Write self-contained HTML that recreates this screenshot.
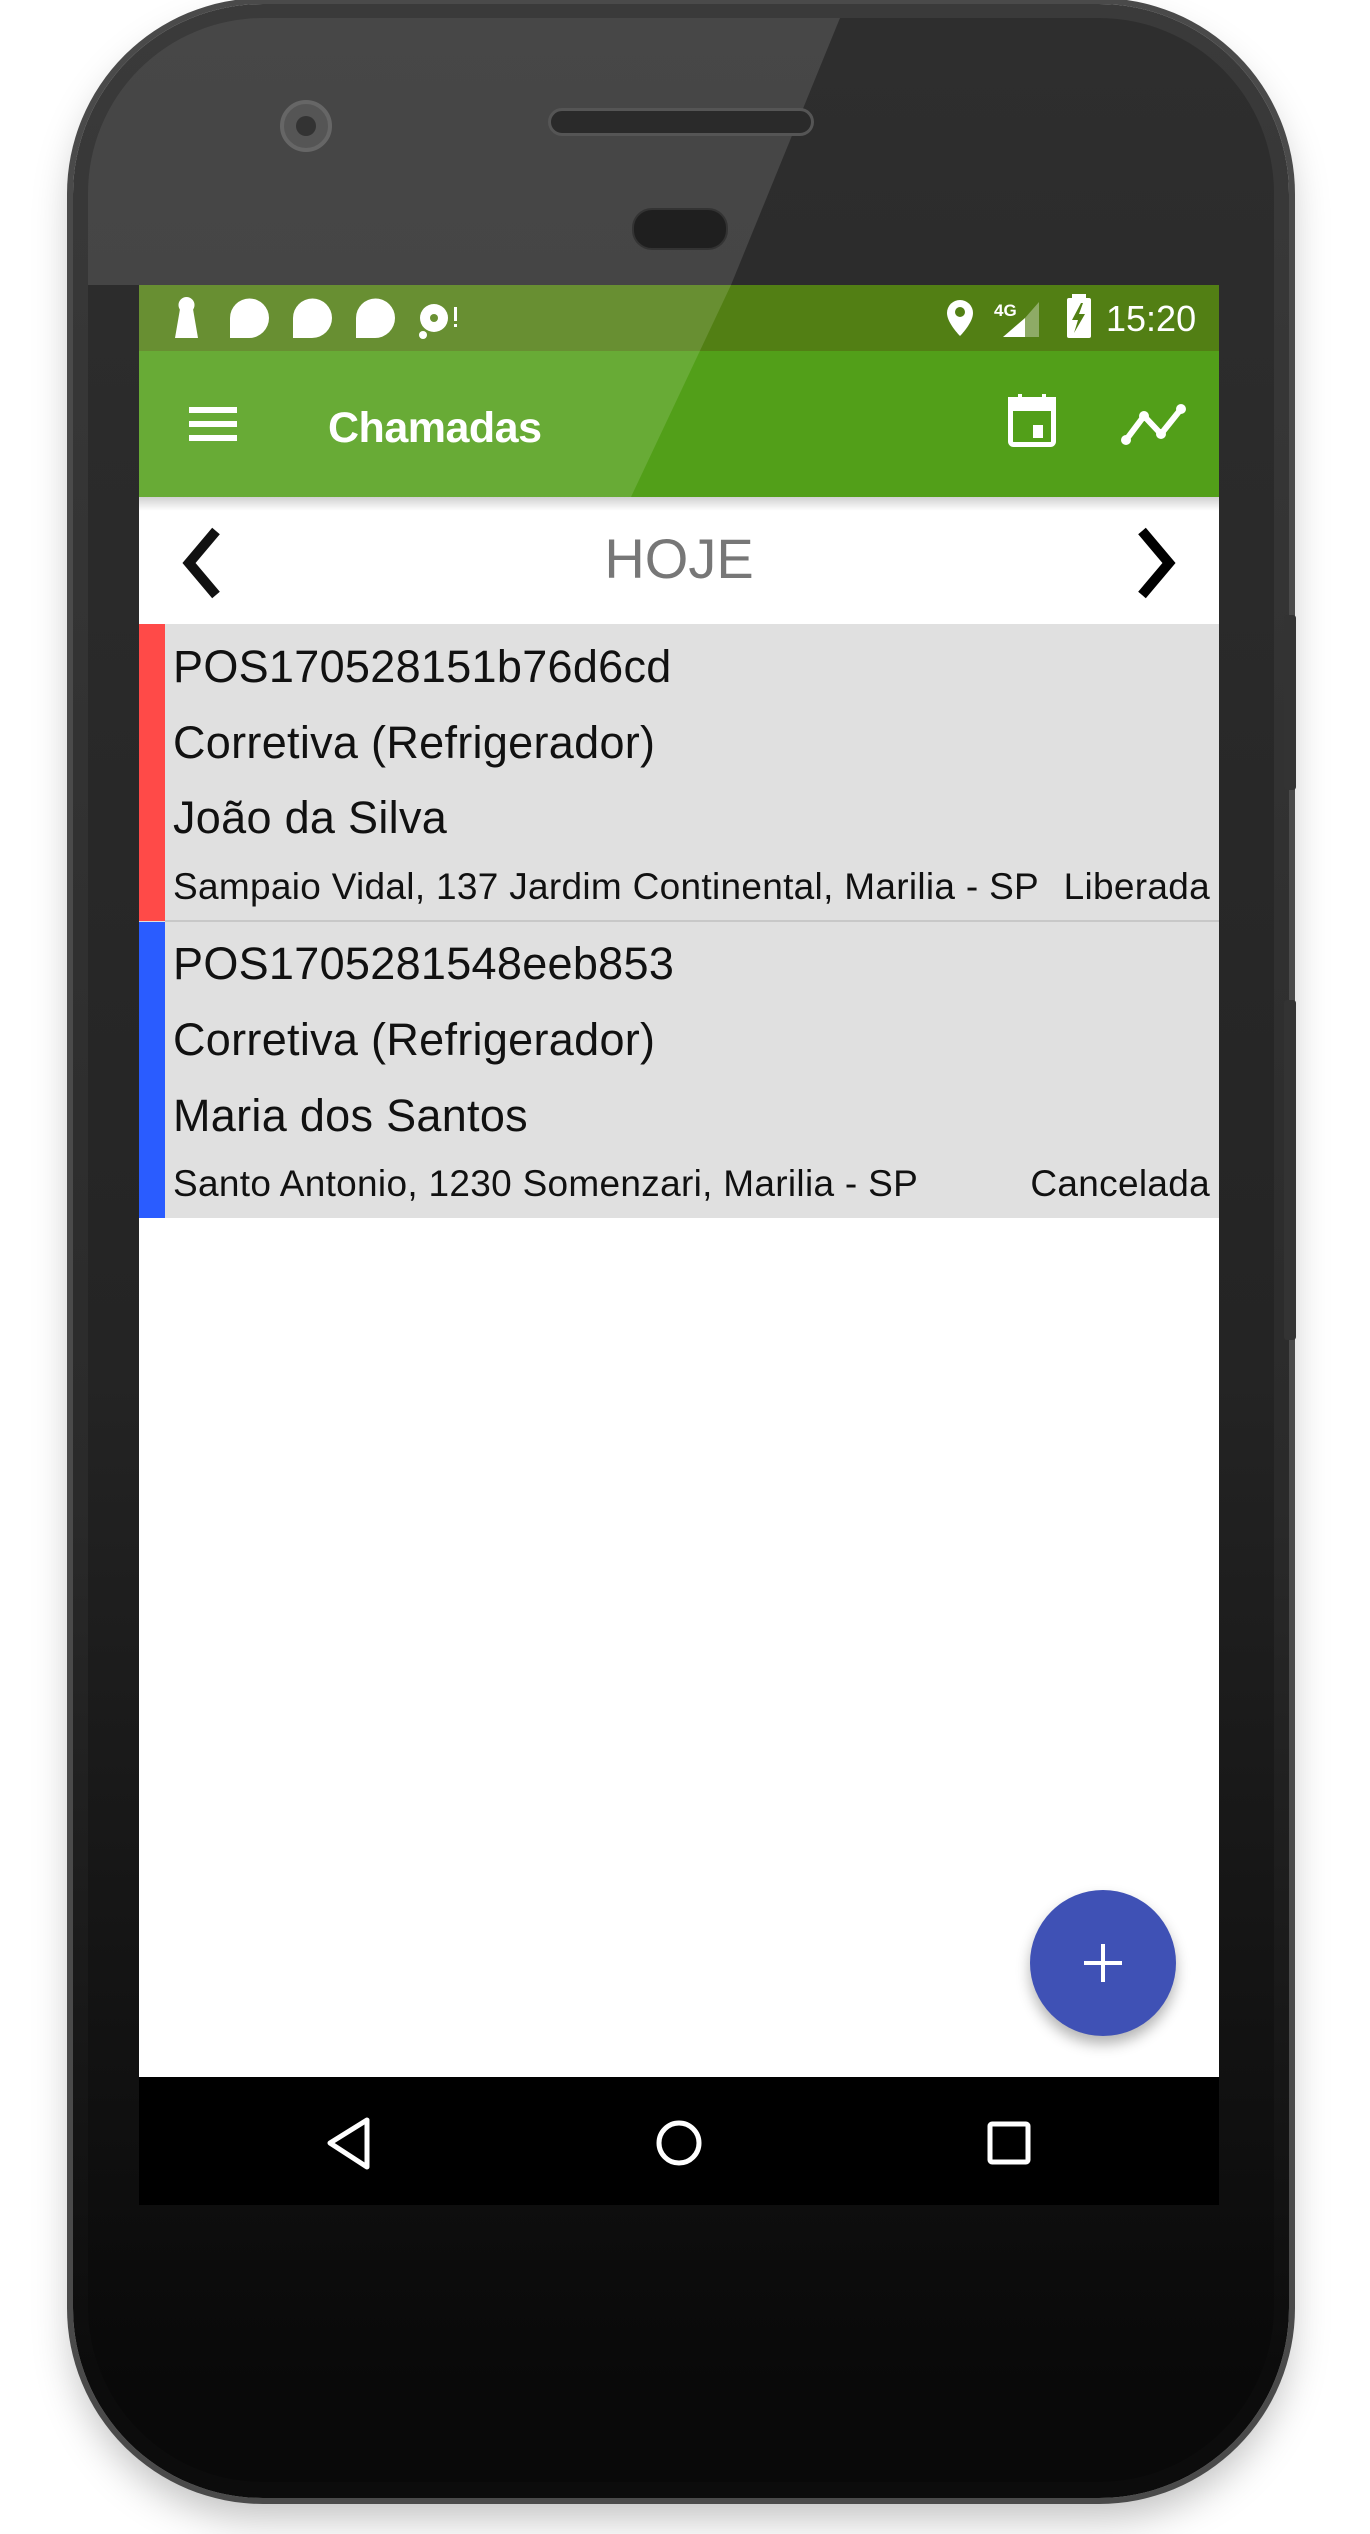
<!DOCTYPE html>
<html><head><meta charset="utf-8"><style>
*{margin:0;padding:0;box-sizing:border-box}
html,body{width:1370px;height:2534px;background:#fff;overflow:hidden;font-family:"Liberation Sans",sans-serif}
.abs{position:absolute}
.phone{left:73px;top:4px;width:1216px;height:2494px;border-radius:190px;background:linear-gradient(180deg,#3a3a3a 0%,#2a2a2a 60%,#0c0c0c 95%);box-shadow:0 0 0 6px #4a4a4a,0 20px 40px rgba(0,0,0,.25)}
.inner{left:88px;top:18px;width:1186px;height:2464px;border-radius:175px;background:linear-gradient(180deg,#2e2e2e 0%,#242424 55%,#090909 96%)}
.t{font-size:45px;color:#111;left:173px;letter-spacing:0.3px;white-space:nowrap}
.a{font-size:37px;color:#111;letter-spacing:0.3px;white-space:nowrap}
</style></head><body>
<div class="abs phone"></div>
<div class="abs inner"></div>
<svg class="abs" style="left:88px;top:18px" width="1186" height="267"><defs><clipPath id="c"><rect x="0" y="0" width="1186" height="600" rx="175"/></clipPath></defs><polygon clip-path="url(#c)" points="0,0 752,0 643,267 0,267" fill="rgba(255,255,255,0.12)"/></svg>
<!-- camera, speaker, sensor -->
<div class="abs" style="left:280px;top:100px;width:52px;height:52px;border-radius:50%;background:#555;border:4px solid #666"></div>
<div class="abs" style="left:296px;top:116px;width:20px;height:20px;border-radius:50%;background:#333"></div>
<div class="abs" style="left:548px;top:108px;width:266px;height:28px;border-radius:14px;background:#2a2a2a;border:3px solid #555"></div>
<div class="abs" style="left:632px;top:208px;width:96px;height:42px;border-radius:20px;background:#1f1f1f;border:2px solid #333"></div>
<!-- side buttons -->
<div class="abs" style="left:1284px;top:615px;width:12px;height:175px;background:#333;border-radius:3px"></div>
<div class="abs" style="left:1284px;top:1000px;width:12px;height:340px;background:#333;border-radius:3px"></div>

<!-- screen -->
<div class="abs" style="left:139px;top:285px;width:1080px;height:1792px;background:#fff;overflow:hidden">
 <div class="abs" style="left:0;top:0;width:1080px;height:66px;background:#527f14"></div>
 <div class="abs" style="left:0;top:66px;width:1080px;height:146px;background:#529f19"></div>
 <svg class="abs" style="left:0;top:0" width="1080" height="212"><polygon points="0,0 592,0 492,212 0,212" fill="rgba(255,255,255,0.13)"/></svg>
 <div class="abs" style="left:0;top:212px;width:1080px;height:14px;background:linear-gradient(rgba(0,0,0,.18),rgba(0,0,0,0))"></div>
 <!-- status icons -->
 <svg class="abs" style="left:0;top:0" width="1080" height="66">
  <g fill="#fff">
   <circle cx="47.5" cy="20" r="8"/><polygon points="41,24 54,24 59,53 36,53"/>
   <path d="M91 53 V33 A19 19 0 0 1 130 33 A20 20 0 0 1 110 53 Z"/>
   <path d="M154 53 V33 A19 19 0 0 1 193 33 A20 20 0 0 1 173 53 Z"/>
   <path d="M217 53 V33 A19 19 0 0 1 256 33 A20 20 0 0 1 236 53 Z"/>
   <circle cx="295" cy="33" r="14"/><circle cx="284" cy="50" r="4"/>
   <rect x="315" y="22" width="3" height="14"/><rect x="315" y="39" width="3" height="3"/>
   <path d="M821 15 a13 13 0 0 1 13 13 c0 10 -13 23 -13 23 c0 0 -13 -13 -13 -23 a13 13 0 0 1 13 -13 z"/>
   <text x="855" y="31" font-size="17" font-weight="bold" font-family="Liberation Sans">4G</text>
   <polygon points="864,52 886,52 886,33" />
   <polygon points="886,52 900,52 900,17 886,33" fill="rgba(255,255,255,0.35)"/>
   <rect x="928" y="13" width="24" height="40" rx="2"/><rect x="933" y="9" width="14" height="5"/>
   <text x="967" y="46" font-size="36" font-family="Liberation Sans">15:20</text>
  </g>
  <polygon points="942,18 933,35 939,35 935,48 946,29 940,29 944,18" fill="#527f14"/>
  <circle cx="821" cy="27" r="5" fill="#527f14"/>
  <circle cx="295" cy="33" r="4" fill="#6a9133"/>
 </svg>
 <!-- toolbar -->
 <div class="abs" style="left:50px;top:122px;width:48px;height:6px;background:#fff"></div>
 <div class="abs" style="left:50px;top:136px;width:48px;height:6px;background:#fff"></div>
 <div class="abs" style="left:50px;top:150px;width:48px;height:6px;background:#fff"></div>
 <div class="abs" style="left:189px;top:119px;font-size:43px;font-weight:bold;color:#fff;letter-spacing:-0.5px">Chamadas</div>
 <svg class="abs" style="left:860px;top:100px" width="220" height="80">
  <g fill="none" stroke="#fff" stroke-width="5">
   <rect x="11.5" y="14.5" width="43" height="45" rx="3"/>
  </g>
  <rect x="9" y="12" width="48" height="14" fill="#fff"/>
  <rect x="19" y="9" width="4" height="8" fill="#fff"/><rect x="43" y="9" width="4" height="8" fill="#fff"/>
  <rect x="34" y="40" width="10" height="13" fill="#fff"/>
  <polyline points="127,55 145,31 162,49 182,24" fill="none" stroke="#fff" stroke-width="6" stroke-linejoin="round"/>
  <circle cx="127" cy="55" r="5" fill="#fff"/><circle cx="145" cy="31" r="5" fill="#fff"/><circle cx="162" cy="49" r="5" fill="#fff"/><circle cx="182" cy="24" r="5" fill="#fff"/>
 </svg>
 <!-- HOJE bar -->
 <svg class="abs" style="left:0;top:212px" width="1080" height="127">
  <polyline points="77,34 50,66 77,98" fill="none" stroke="#111" stroke-width="10"/>
  <polyline points="1003,34 1030,66 1003,98" fill="none" stroke="#000" stroke-width="10"/>
 </svg>
 <div class="abs" style="left:465px;top:241px;width:150px;text-align:center;font-size:56px;color:#777">HOJE</div>
 <!-- rows -->
 <div class="abs" style="left:0;top:339px;width:1080px;height:594px;background:#e0e0e0"></div>
 <div class="abs" style="left:0;top:339px;width:26px;height:297px;background:#ff4a48"></div>
 <div class="abs" style="left:26px;top:635px;width:1054px;height:2px;background:#c8c8c8"></div>
 <div class="abs" style="left:0;top:637px;width:26px;height:296px;background:#2a5cff"></div>
</div>
<div class="abs t" style="top:641px">POS170528151b76d6cd</div>
<div class="abs t" style="top:717px">Corretiva (Refrigerador)</div>
<div class="abs t" style="top:792px">João da Silva</div>
<div class="abs a" style="left:173px;top:866px">Sampaio Vidal, 137 Jardim Continental, Marilia - SP</div>
<div class="abs a" style="right:160px;top:866px">Liberada</div>
<div class="abs t" style="top:938px">POS1705281548eeb853</div>
<div class="abs t" style="top:1014px">Corretiva (Refrigerador)</div>
<div class="abs t" style="top:1090px">Maria dos Santos</div>
<div class="abs a" style="left:173px;top:1163px">Santo Antonio, 1230 Somenzari, Marilia - SP</div>
<div class="abs a" style="right:160px;top:1163px">Cancelada</div>
<!-- FAB -->
<div class="abs" style="left:1030px;top:1890px;width:146px;height:146px;border-radius:50%;background:#3f51b5;box-shadow:0 8px 14px rgba(0,0,0,.3)"></div>
<div class="abs" style="left:1084px;top:1961px;width:38px;height:4px;background:#fff"></div>
<div class="abs" style="left:1101px;top:1944px;width:4px;height:38px;background:#fff"></div>
<!-- nav bar -->
<div class="abs" style="left:139px;top:2077px;width:1080px;height:128px;background:#000"></div>
<svg class="abs" style="left:139px;top:2077px" width="1080" height="128">
 <g fill="none" stroke="#fff" stroke-width="5" stroke-linejoin="round">
  <polygon points="228,43 228,90 191,66"/>
  <ellipse cx="540" cy="66" rx="20" ry="20"/>
  <rect x="851" y="47" width="38" height="38" rx="2"/>
 </g>
</svg>
</body></html>
